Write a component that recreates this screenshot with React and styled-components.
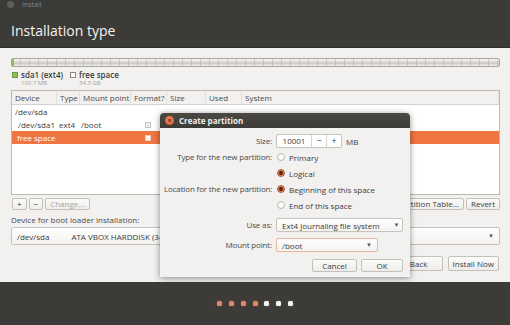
import React from 'react';
import styled, { createGlobalStyle } from 'styled-components';

const GlobalStyle = createGlobalStyle`
  html, body {
    margin: 0;
    padding: 0;
    background: #3c3b37;
  }
  body {
    font-family: "Open Sans", "Noto Sans", sans-serif;
    color: #3c3c3c;
  }
`;

const Window = styled.div`
  position: relative;
  width: 510px;
  height: 325px;
  overflow: hidden;
  display: flex;
  flex-direction: column;
  background: #3c3b37;
`;

const TitleBar = styled.div`
  height: 10px;
  box-sizing: border-box;
  padding: 1px 0 0 7px;
  display: flex;
  align-items: flex-start;
  gap: 8px;
  color: #8b8983;
  font-size: 7px;
  line-height: 8px;
`;

const TitleClose = styled.div`
  width: 7px;
  height: 7px;
  border-radius: 50%;
  background: #5f5e59;
`;

const Header = styled.div`
  height: 38px;
  box-sizing: border-box;
  padding: 12px 0 0 11px;
  border-bottom: 1px solid #2f2e2b;
  h1 {
    margin: 0;
    font-size: 14px;
    font-weight: 400;
    line-height: 18px;
    color: #f4f3f1;
  }
`;

const Content = styled.div`
  flex: 1;
  background: #f2f1f0;
  padding: 10px 10px 0 11px;
  display: flex;
  flex-direction: column;
  font-size: 8px;
`;

const Footer = styled.div`
  height: 43px;
  box-sizing: border-box;
  padding-top: 19px;
  display: flex;
  justify-content: center;
  gap: 6.7px;
`;

const Dot = styled.div`
  width: 5px;
  height: 5px;
  border-radius: 1.5px;
  background: ${(p) => (p.$done ? '#d98a6a' : '#f3f3f3')};
  box-shadow: 0 0 2px ${(p) => (p.$done ? 'rgba(233,120,80,0.6)' : 'rgba(255,255,255,0.3)')};
`;

const Bar = styled.div`
  height: 9px;
  box-sizing: border-box;
  border: 1px solid #a9a6a0;
  border-radius: 2px;
  display: flex;
  background: repeating-linear-gradient(
      90deg,
      transparent 0 8px,
      rgba(150, 148, 142, 0.35) 8px 9px
    ),
    linear-gradient(#f8f8f7, #dddbd7 45%, #c9c6c1 55%, #f0efed);
`;

const BarUsed = styled.div`
  width: 2px;
  background: #8cc152;
`;

const Legend = styled.div`
  margin-top: 4px;
  display: flex;
  gap: 7px;
  padding-left: 1px;
`;

const LegendItem = styled.div`
  display: flex;
  gap: 3px;
`;

const Swatch = styled.div`
  width: 6px;
  height: 6px;
  margin-top: 1px;
  box-sizing: border-box;
  border: 1px solid ${(p) => (p.$free ? '#8a8782' : '#6e9a3c')};
  background: ${(p) => (p.$free ? '#ffffff' : '#8cc152')};
`;

const LegendText = styled.div`
  display: flex;
  flex-direction: column;
  b {
    font-weight: 600;
    font-size: 8px;
    line-height: 8px;
    color: #3c3c3c;
  }
  span {
    font-size: 6px;
    line-height: 8px;
    color: #a3a19c;
  }
`;

const Table = styled.div`
  margin-top: 3px;
  height: 105px;
  box-sizing: border-box;
  border: 1px solid #bcb9b3;
  background: #ffffff;
  display: flex;
  flex-direction: column;
`;

const cols = '45px 23px 51px 36px 39px 36px 1fr';

const HeadRow = styled.div`
  display: grid;
  grid-template-columns: ${cols};
  height: 13px;
  background: #f2f1f0;
  border-bottom: 1px solid #d6d3ce;
  line-height: 13px;
  color: #4a4a4a;
`;

const HeadCell = styled.div`
  padding-left: 3px;
  border-right: 1px solid #e2e0dc;
  white-space: nowrap;
`;

const Row = styled.div`
  display: grid;
  grid-template-columns: ${cols};
  height: 13px;
  line-height: 13px;
  background: ${(p) => (p.$selected ? '#ef7542' : 'transparent')};
  color: ${(p) => (p.$selected ? '#ffffff' : '#3c3c3c')};
`;

const Cell = styled.div`
  padding-left: ${(p) => p.$indent || 3}px;
  white-space: nowrap;
  display: flex;
  align-items: center;
`;

const Check = styled.div`
  width: 6px;
  height: 6px;
  margin-left: 11px;
  box-sizing: border-box;
  border: 1px solid ${(p) => (p.$light ? '#f7c9b3' : '#c3c0ba')};
  background: ${(p) => (p.$light ? '#fff6f2' : '#fbfbfa')};
  font-size: 5px;
  line-height: 4px;
  color: #a09d97;
  text-align: center;
`;

const Toolbar = styled.div`
  margin-top: 3px;
  height: 12px;
  display: flex;
  align-items: center;
  gap: 2px;
  padding-left: 1px;
`;

const Spacer = styled.div`
  flex: 1;
`;

const Button = styled.button`
  height: ${(p) => p.$h || 12}px;
  min-width: ${(p) => p.$w || 0}px;
  padding: 0 4px;
  box-sizing: border-box;
  font-family: inherit;
  font-size: 8px;
  line-height: 1;
  color: ${(p) => (p.disabled ? '#a8a6a1' : '#3c3c3c')};
  border: 1px solid #c4c1bb;
  border-radius: 2px;
  background: linear-gradient(#fbfbfa, #eeedeb);
`;

const Label = styled.div`
  margin-top: 5px;
  height: 10px;
  line-height: 10px;
  color: #4a4a4a;
`;

const Combo = styled.div`
  width: ${(p) => (p.$w ? `${p.$w}px` : 'auto')};
  height: ${(p) => p.$h || 14}px;
  box-sizing: border-box;
  display: flex;
  align-items: center;
  gap: ${(p) => p.$gap || 14}px;
  padding: 0 5px;
  border: 1px solid ${(p) => (p.$focus ? '#e9b59c' : '#c6c3bd')};
  border-radius: 2px;
  background: linear-gradient(#fefefe, #f4f3f2);
  font-size: 8px;
  color: #3c3c3c;
  white-space: nowrap;
  overflow: hidden;
`;

const BootCombo = styled(Combo)`
  margin-top: 2px;
`;

const Arrow = styled.span`
  margin-left: auto;
  font-size: 6px;
  color: #555;
`;

const Actions = styled.div`
  margin-top: 11px;
  display: flex;
  justify-content: flex-end;
  gap: 5px;
  padding-right: 1px;
`;

/* dialog */

const Dialog = styled.div`
  position: absolute;
  left: 160px;
  top: 113px;
  width: 250px;
  height: 164px;
  border-radius: 4px 4px 0 0;
  background: #f2f1f0;
  box-shadow: 0 1px 6px rgba(0, 0, 0, 0.45);
  display: flex;
  flex-direction: column;
  font-size: 8px;
  overflow: hidden;
`;

const DialogTitle = styled.div`
  height: 15px;
  display: flex;
  align-items: center;
  gap: 5px;
  padding-left: 5px;
  background: linear-gradient(#4a4944, #3c3b37);
  color: #eeeeec;
  font-weight: 700;
  font-size: 8px;
`;

const CloseBtn = styled.div`
  width: 9px;
  height: 9px;
  border-radius: 50%;
  background: radial-gradient(circle at 50% 40%, #f58a61, #d9542a);
  display: flex;
  align-items: center;
  justify-content: center;
  color: #4a1f10;
  font-size: 7px;
  line-height: 1;
  font-weight: 700;
`;

const Form = styled.div`
  display: grid;
  grid-template-columns: 108px 1fr;
  column-gap: 4px;
  padding: 6px 7px 0 4px;
`;

const FieldLabel = styled.div`
  grid-column: 1;
  text-align: right;
  height: 14px;
  line-height: 14px;
  margin-top: ${(p) => p.$top || 0}px;
  color: #4a4a4a;
  letter-spacing: -0.15px;
  white-space: nowrap;
`;

const Field = styled.div`
  grid-column: 2;
  height: 14px;
  margin-top: ${(p) => p.$top || 0}px;
  display: flex;
  align-items: center;
  gap: 4px;
  white-space: nowrap;
`;

const Spin = styled.div`
  display: flex;
  height: 14px;
  box-sizing: border-box;
  border: 1px solid #c6c3bd;
  border-radius: 2px;
  background: #ffffff;
  span {
    width: 34px;
    line-height: 12px;
    text-align: center;
  }
  i {
    font-style: normal;
    width: 14px;
    line-height: 12px;
    text-align: center;
    border-left: 1px solid #dad7d2;
    font-size: 9px;
  }
`;

const Radio = styled.div`
  width: 8px;
  height: 8px;
  margin-left: 1px;
  box-sizing: border-box;
  border-radius: 50%;
  border: 1px solid ${(p) => (p.$on ? '#b35a33' : '#b9b6b0')};
  background: ${(p) =>
    p.$on ? 'radial-gradient(circle, #5b2a16 0 1.6px, #e07c52 2.2px)' : '#fbfbfa'};
`;

const DialogButtons = styled.div`
  display: flex;
  justify-content: flex-end;
  gap: 4px;
  padding: 7px 7px 0 0;
`;

const dots = [true, true, true, true, false, false, false];

const App = () => {
  return (
    <>
      <GlobalStyle />
      <Window>
        <TitleBar>
          <TitleClose />
          <span>Install</span>
        </TitleBar>
        <Header>
          <h1>Installation type</h1>
        </Header>
        <Content>
          <Bar>
            <BarUsed />
          </Bar>
          <Legend>
            <LegendItem>
              <Swatch />
              <LegendText>
                <b>sda1 (ext4)</b>
                <span>100.7 MB</span>
              </LegendText>
            </LegendItem>
            <LegendItem>
              <Swatch $free />
              <LegendText>
                <b>free space</b>
                <span>34.3 GB</span>
              </LegendText>
            </LegendItem>
          </Legend>
          <Table>
            <HeadRow>
              <HeadCell>Device</HeadCell>
              <HeadCell>Type</HeadCell>
              <HeadCell>Mount point</HeadCell>
              <HeadCell>Format?</HeadCell>
              <HeadCell>Size</HeadCell>
              <HeadCell>Used</HeadCell>
              <HeadCell>System</HeadCell>
            </HeadRow>
            <Row>
              <Cell>/dev/sda</Cell>
            </Row>
            <Row>
              <Cell $indent={6}>/dev/sda1</Cell>
              <Cell $indent={2}>ext4</Cell>
              <Cell $indent={1}>/boot</Cell>
              <Cell>
                <Check>✓</Check>
              </Cell>
            </Row>
            <Row $selected>
              <Cell $indent={5}>free space</Cell>
              <Cell />
              <Cell />
              <Cell>
                <Check $light />
              </Cell>
            </Row>
          </Table>
          <Toolbar>
            <Button $w={12}>+</Button>
            <Button $w={12}>−</Button>
            <Button disabled>Change...</Button>
            <Spacer />
            <Button>New Partition Table...</Button>
            <Button>Revert</Button>
          </Toolbar>
          <Label>Device for boot loader installation:</Label>
          <BootCombo $h={18} $gap={22}>
            <span>/dev/sda</span>
            <span>ATA VBOX HARDDISK (34.4 GB)</span>
            <Arrow>▼</Arrow>
          </BootCombo>
          <Actions>
            <Button $h={15} $w={48}>Back</Button>
            <Button $h={15} $w={49}>Install Now</Button>
          </Actions>
        </Content>
        <Footer>
          {dots.map((d, i) => (
            <Dot key={i} $done={d} />
          ))}
        </Footer>

        <Dialog>
          <DialogTitle>
            <CloseBtn>×</CloseBtn>
            <span>Create partition</span>
          </DialogTitle>
          <Form>
            <FieldLabel>Size:</FieldLabel>
            <Field>
              <Spin>
                <span>10001</span>
                <i>−</i>
                <i>+</i>
              </Spin>
              <span>MB</span>
            </Field>

            <FieldLabel $top={2}>Type for the new partition:</FieldLabel>
            <Field $top={2}>
              <Radio />
              <span>Primary</span>
            </Field>
            <FieldLabel $top={2} />
            <Field $top={2}>
              <Radio $on />
              <span>Logical</span>
            </Field>

            <FieldLabel $top={2}>Location for the new partition:</FieldLabel>
            <Field $top={2}>
              <Radio $on />
              <span>Beginning of this space</span>
            </Field>
            <FieldLabel $top={2} />
            <Field $top={2}>
              <Radio />
              <span>End of this space</span>
            </Field>

            <FieldLabel $top={6}>Use as:</FieldLabel>
            <Field $top={6}>
              <Combo $w={127}>
                <span>Ext4 journaling file system</span>
                <Arrow>▼</Arrow>
              </Combo>
            </Field>

            <FieldLabel $top={6}>Mount point:</FieldLabel>
            <Field $top={6}>
              <Combo $focus $w={102}>
                <span>/boot</span>
                <Arrow>▼</Arrow>
              </Combo>
            </Field>
          </Form>
          <DialogButtons>
            <Button $h={13} $w={45}>Cancel</Button>
            <Button $h={13} $w={42}>OK</Button>
          </DialogButtons>
        </Dialog>
      </Window>
    </>
  );
};

export default App;
